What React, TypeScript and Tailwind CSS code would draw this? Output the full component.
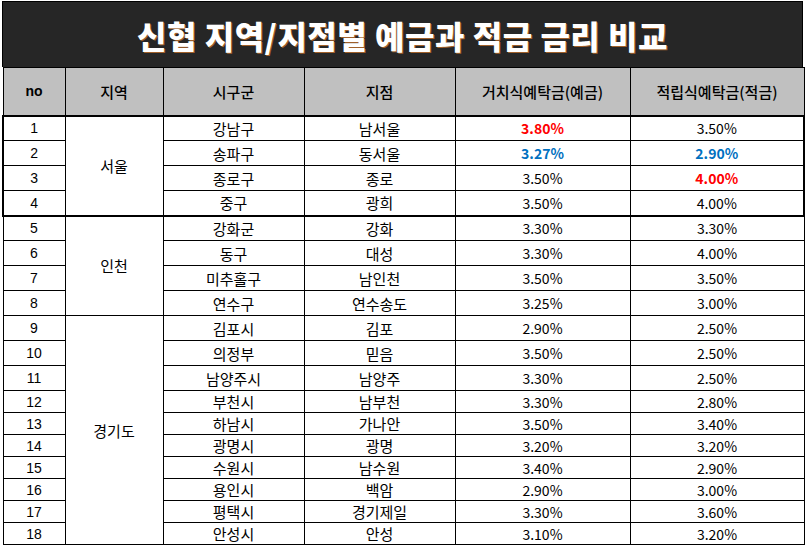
import React from "react";

type Row = {
  no: number;
  city: string;
  branch: string;
  deposit: string;
  saving: string;
  depositTone?: "red" | "blue";
  savingTone?: "red" | "blue";
};

const seoul: Row[] = [
  { no: 1, city: "강남구", branch: "남서울", deposit: "3.80%", saving: "3.50%", depositTone: "red" },
  { no: 2, city: "송파구", branch: "동서울", deposit: "3.27%", saving: "2.90%", depositTone: "blue", savingTone: "blue" },
  { no: 3, city: "종로구", branch: "종로", deposit: "3.50%", saving: "4.00%", savingTone: "red" },
  { no: 4, city: "중구", branch: "광희", deposit: "3.50%", saving: "4.00%" },
];

const incheon: Row[] = [
  { no: 5, city: "강화군", branch: "강화", deposit: "3.30%", saving: "3.30%" },
  { no: 6, city: "동구", branch: "대성", deposit: "3.30%", saving: "4.00%" },
  { no: 7, city: "미추홀구", branch: "남인천", deposit: "3.50%", saving: "3.50%" },
  { no: 8, city: "연수구", branch: "연수송도", deposit: "3.25%", saving: "3.00%" },
];

const gyeonggi: Row[] = [
  { no: 9, city: "김포시", branch: "김포", deposit: "2.90%", saving: "2.50%" },
  { no: 10, city: "의정부", branch: "믿음", deposit: "3.50%", saving: "2.50%" },
  { no: 11, city: "남양주시", branch: "남양주", deposit: "3.30%", saving: "2.50%" },
  { no: 12, city: "부천시", branch: "남부천", deposit: "3.30%", saving: "2.80%" },
  { no: 13, city: "하남시", branch: "가나안", deposit: "3.50%", saving: "3.40%" },
  { no: 14, city: "광명시", branch: "광명", deposit: "3.20%", saving: "3.20%" },
  { no: 15, city: "수원시", branch: "남수원", deposit: "3.40%", saving: "2.90%" },
  { no: 16, city: "용인시", branch: "백암", deposit: "2.90%", saving: "3.00%" },
  { no: 17, city: "평택시", branch: "경기제일", deposit: "3.30%", saving: "3.60%" },
  { no: 18, city: "안성시", branch: "안성", deposit: "3.10%", saving: "3.20%" },
];

const tone = (t?: "red" | "blue") =>
  t === "red"
    ? "text-[#ff0000] font-bold"
    : t === "blue"
    ? "text-[#0070c0] font-bold"
    : "text-black";

const cell = "border border-black text-center align-middle leading-none p-0";

function Group({
  name,
  rows,
  boxed,
}: {
  name: string;
  rows: Row[];
  boxed?: boolean;
}) {
  return (
    <>
      {rows.map((r, i) => {
        const first = i === 0;
        const last = i === rows.length - 1;
        const top = boxed && first ? " border-t-2" : "";
        const bottom = boxed && last ? " border-b-2" : "";
        const h = r.no >= 12 ? "h-[22px]" : "h-[25px]";
        return (
          <tr key={r.no} className={h}>
            <td
              className={`${cell}${top}${bottom}${boxed ? " border-l-2" : ""} font-['Liberation_Sans',sans-serif] text-[14px]`}
            >
              {r.no}
            </td>
            {first && (
              <td
                rowSpan={rows.length}
                className={`${cell}${boxed ? " border-t-2 border-b-2" : ""}`}
              >
                {name}
              </td>
            )}
            <td className={`${cell}${top}${bottom}`}>{r.city}</td>
            <td className={`${cell}${top}${bottom}`}>{r.branch}</td>
            <td className={`${cell}${top}${bottom} text-[14px] ${tone(r.depositTone)}`}>
              {r.deposit}
            </td>
            <td
              className={`${cell}${top}${bottom}${boxed ? " border-r-2" : ""} text-[14px] ${tone(r.savingTone)}`}
            >
              {r.saving}
            </td>
          </tr>
        );
      })}
    </>
  );
}

export default function App() {
  return (
    <div className="w-[806px] h-[548px] bg-white pt-px pl-[2px] font-['Noto_Sans_CJK_KR','Noto_Sans',sans-serif] text-[15px] text-black">
      <div className="w-[801px]">
        <div className="h-[66px] bg-[#262626] border border-black border-b-0 flex items-center justify-center">
          <h1 className="text-white text-[32px] font-black tracking-[0.5px] [text-shadow:1px_1px_0_#a0602a]">
            신협 지역/지점별 예금과 적금 금리 비교
          </h1>
        </div>
        <table className="w-[801px] border-collapse table-fixed">
          <colgroup>
            <col className="w-[62px]" />
            <col className="w-[98px]" />
            <col className="w-[141px]" />
            <col className="w-[151px]" />
            <col className="w-[175px]" />
            <col className="w-[174px]" />
          </colgroup>
          <thead>
            <tr className="h-[48px] bg-[#c0c0c0]">
              <th className={`${cell} font-bold font-['Liberation_Sans',sans-serif] text-[14px]`}>
                no
              </th>
              <th className={`${cell} font-medium`}>지역</th>
              <th className={`${cell} font-medium`}>시구군</th>
              <th className={`${cell} font-medium`}>지점</th>
              <th className={`${cell} font-medium`}>거치식예탁금(예금)</th>
              <th className={`${cell} font-medium`}>적립식예탁금(적금)</th>
            </tr>
          </thead>
          <tbody>
            <Group name="서울" rows={seoul} boxed />
            <Group name="인천" rows={incheon} />
            <Group name="경기도" rows={gyeonggi} />
          </tbody>
        </table>
      </div>
    </div>
  );
}
